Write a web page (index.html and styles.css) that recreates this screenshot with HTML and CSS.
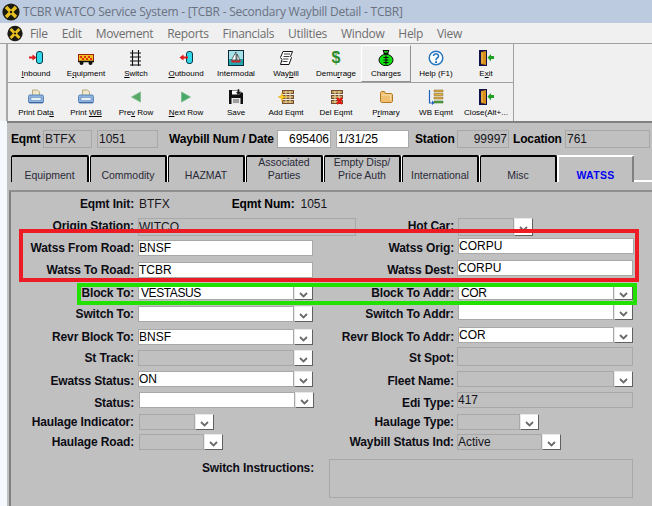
FILE: index.html
```html
<!DOCTYPE html>
<html lang="en">
<head>
<meta charset="utf-8">
<title>TCBR WATCO Service System</title>
<link rel="stylesheet" href="styles.css">
</head>
<body>
<svg class="defs" width="0" height="0" aria-hidden="true">
  <symbol id="logo" viewBox="0 0 18 18">
    <circle cx="9" cy="9" r="8.6" fill="#1a1a12"/>
    <path d="M4 4 14 14M14 4 4 14" stroke="#e8c020" stroke-width="3.4"/>
    <circle cx="9" cy="9" r="1.2" fill="#1a1a12"/>
  </symbol>
  <symbol id="chev" viewBox="0 0 9 6">
    <path d="M1 1 4.5 4.5 8 1" fill="none" stroke="#6a6a6a" stroke-width="1.8"/>
  </symbol>
  <symbol id="door" viewBox="0 0 16 16">
    <path d="M1 0h8v16H1z" fill="#10104a"/>
    <path d="M3 2 8 1v14l-5-1z" fill="#d89018"/>
    <path d="M4 3v10" stroke="#f0c060"/>
    <path d="M16 6v3h-3v2.500L9.500 7.500 13 4v2z" fill="#20a020"/>
  </symbol>
  <symbol id="printer" viewBox="0 0 16 15">
    <path d="M4.500 .5h5l2 2v4h-7z" fill="#f0e8c8" stroke="#b8a880"/>
    <rect x=".5" y="5.500" width="15" height="8" rx="1.500" fill="#8cb4e0" stroke="#5c84b8"/>
    <rect x="3" y="8" width="10" height="3" fill="#e8f0fa" stroke="#6a8cb8" stroke-width=".6"/>
    <path d="M1 13h14" stroke="#3c64a0"/>
  </symbol>
  <symbol id="rows" viewBox="0 0 15 14">
    <g fill="#c8a060" stroke="#705030" stroke-width="1">
      <rect x="3.500" y=".5" width="11" height="3"/>
      <rect x="3.500" y="5.500" width="11" height="3"/>
      <rect x="3.500" y="10.500" width="11" height="3"/>
    </g>
    <path d="M7 1v12M11 1v12" stroke="#f0e0b0"/>
  </symbol>
</svg>

<header class="title-bar">
  <svg class="logo-title"><use href="#logo"/></svg>
  <span class="title-text">TCBR WATCO Service System - [TCBR - Secondary Waybill Detail - TCBR]</span>
</header>

<nav class="menu-bar">
  <svg class="logo-menu"><use href="#logo"/></svg>
  <span>File</span><span>Edit</span><span>Movement</span><span>Reports</span><span>Financials</span><span>Utilities</span><span>Window</span><span>Help</span><span>View</span>
</nav>

<section class="toolbars">
  <div class="toolbar">
    <div class="tool">
      <svg class="ico" viewBox="0 0 16 16"><rect x="8.500" y="1.500" width="6" height="12" rx="2.500" fill="#30d8e8" stroke="#083848"/><path d="M1 7.500h4" stroke="#e01818" stroke-width="2"/><path d="M4.500 4.500 8.500 7.500 4.500 10.500z" fill="#e01818"/></svg>
      <span><u>I</u>nbound</span>
    </div>
    <div class="tool">
      <svg class="ico" viewBox="0 0 16 16"><rect x=".5" y="4.500" width="15" height="7" fill="#f0c020" stroke="#a02010"/><path d="M2 6h2v2H2zM6 6h2v2H6zM10 6h2v2h-2zM4 8h2v2H4zM8 8h2v2H8zM12 8h2v2h-2z" fill="#e03010"/><path d="M0 11.500h16" stroke="#111" stroke-width="1.500"/><circle cx="3.500" cy="13" r="2" fill="#111"/><circle cx="12.500" cy="13" r="2" fill="#111"/></svg>
      <span>E<u>q</u>uipment</span>
    </div>
    <div class="tool">
      <svg class="ico" viewBox="0 0 16 16"><path d="M4.500 0v16M10.500 0v16M2 3h11M2 7h11M2 11h11M2 15h11" stroke="#111" stroke-width="1.100"/></svg>
      <span><u>S</u>witch</span>
    </div>
    <div class="tool">
      <svg class="ico" viewBox="0 0 16 16"><rect x="8.500" y="1.500" width="6" height="12" rx="2.500" fill="#30d8e8" stroke="#083848"/><path d="M5 7.500h5" stroke="#e01818" stroke-width="2"/><path d="M5.500 4.500 1.500 7.500 5.500 10.500z" fill="#e01818"/></svg>
      <span><u>O</u>utbound</span>
    </div>
    <div class="tool">
      <svg class="ico" viewBox="0 0 16 16"><rect x=".5" y=".5" width="15" height="15" fill="#20a8b0" stroke="#082838"/><path d="M1 1h14v8H1z" fill="#a8e0e8"/><path d="M8 2v8H3.500z" fill="#fff" stroke="#111" stroke-width=".6"/><path d="M9 4l3 6H9z" fill="#fff" stroke="#111" stroke-width=".6"/><path d="M2.500 10.500h11l-1.500 2H4z" fill="#d82020"/></svg>
      <span>Intermodal</span>
    </div>
    <div class="tool">
      <svg class="ico" viewBox="0 0 16 16"><path d="M5 1.500h9.500l-2 5 1 1-2.500 7H2.500l1.500-5-1.500-2z" fill="#fff" stroke="#111"/><path d="M6 4h6M5.500 6.500h6M5 9h5.500M4.500 11.500h5" stroke="#111" stroke-width=".8"/></svg>
      <span>Way<u>b</u>ill</span>
    </div>
    <div class="tool">
      <span class="dollar">$</span>
      <span>Demu<u>r</u>rage</span>
    </div>
    <div class="tool tool-raised">
      <svg class="ico" viewBox="0 0 16 16"><path d="M5 .5h6l-1.500 3h-3z" fill="#18c018" stroke="#111"/><ellipse cx="8" cy="10" rx="7" ry="5.700" fill="#10e010" stroke="#111"/><path d="M5.500 3.500h5" stroke="#111" stroke-width="1.400"/><path d="M8 5.500v9M5.500 7.500h5M5.500 10h5M5.500 12.500h5" stroke="#111" stroke-width="1.100"/></svg>
      <span>Charges</span>
    </div>
    <div class="tool">
      <svg class="ico" viewBox="0 0 16 16"><circle cx="8" cy="8" r="6.800" fill="#fff" stroke="#2878c0" stroke-width="1.500"/><path d="M5.500 6a2.500 2.200 0 1 1 3.800 1.900C8.300 8.600 8 9 8 10.200" fill="none" stroke="#2070b8" stroke-width="1.600"/><path d="M7 11.300h2v1.800H7z" fill="#2070b8"/></svg>
      <span>Help (F1)</span>
    </div>
    <div class="tool">
      <svg class="ico"><use href="#door"/></svg>
      <span>E<u>x</u>it</span>
    </div>
  </div>
  <div class="toolbar">
    <div class="tool">
      <svg class="ico"><use href="#printer"/></svg>
      <span>Print Dat<u>a</u></span>
    </div>
    <div class="tool">
      <svg class="ico"><use href="#printer"/></svg>
      <span>Print <u>WB</u></span>
    </div>
    <div class="tool">
      <svg class="ico" viewBox="0 0 16 16"><path d="M12.500 3v10L3.500 8z" fill="#58a868" stroke="#80c090"/></svg>
      <span>Pre<u>v</u> Row</span>
    </div>
    <div class="tool">
      <svg class="ico" viewBox="0 0 16 16"><path d="M3.500 3v10l9-5z" fill="#48a868" stroke="#80c090"/></svg>
      <span><u>N</u>ext Row</span>
    </div>
    <div class="tool">
      <svg class="ico" viewBox="0 0 16 16"><path d="M1 1h9l5 3v11H1z" fill="#111"/><path d="M4 1.500h5v4H4z" fill="#fff"/><path d="M3.500 9h9v6h-9z" fill="#e8e8e8"/><path d="M5 11h6M5 13h6" stroke="#555"/><path d="M9.500 0h2v3h2l-3 3-3-3h2z" fill="#111" stroke="#fff" stroke-width=".4"/></svg>
      <span>Save</span>
    </div>
    <div class="tool">
      <svg class="ico" viewBox="0 0 16 16"><use href="#rows" x="1" y="1" width="15" height="14"/><path d="M4 3.500 5 7l3.300 1-3.300 1-1 3.500L3 9 0 8l3-1z" fill="#ffd020" stroke="#e8a010" stroke-width=".5"/></svg>
      <span>Add Eqmt</span>
    </div>
    <div class="tool">
      <svg class="ico" viewBox="0 0 16 16"><use href="#rows" x="0" y="1" width="15" height="14"/><path d="M9 9l5 6M14 9l-5 6" stroke="#e81010" stroke-width="2"/></svg>
      <span>Del Eqmt</span>
    </div>
    <div class="tool">
      <svg class="ico" viewBox="0 0 16 16"><path d="M2.500 4.500V3.500l1-1h3l1 2h6l1 1v7l-1 1h-10l-1-1z" fill="#f0c070" stroke="#b07820"/><path d="M3.500 6h9v5" fill="none" stroke="#f8e0b0"/></svg>
      <span>P<u>r</u>imary</span>
    </div>
    <div class="tool">
      <svg class="ico" viewBox="0 0 16 16"><path d="M1.500 1v13H5" fill="none" stroke="#2060c0" stroke-width="1.200"/><path d="M4 11.500 6.500 14 4 16z" fill="#2060c0"/><path d="M6 1h9v2H6zM6 4.500h9v2H6zM6 8h9v2H6z" fill="#e0b040" stroke="#806020" stroke-width=".5"/><path d="M6 12h9v2H6z" fill="#50a840" stroke="#306020" stroke-width=".5"/></svg>
      <span>WB Eqmt</span>
    </div>
    <div class="tool">
      <svg class="ico"><use href="#door"/></svg>
      <span>Close(Alt+...</span>
    </div>
  </div>
</section>

<main class="content">
  <div class="head-row">
    <b class="head-eqmt">Eqmt</b>
    <div class="field w49">BTFX</div>
    <div class="field w61 ml5">1051</div>
    <b class="head-waybill">Waybill Num / Date</b>
    <div class="field on w54 right">695406</div>
    <div class="field on w73 ml5">1/31/25</div>
    <b class="head-station">Station</b>
    <div class="field w52 right">99997</div>
    <b class="head-location">Location</b>
    <div class="field w85">761</div>
  </div>

  <div class="tabstrip">
    <div class="tabs">
      <div class="tab first">Equipment</div>
      <div class="tab">Commodity</div>
      <div class="tab">HAZMAT</div>
      <div class="tab">Associated<br>Parties</div>
      <div class="tab">Empty Disp/<br>Price Auth</div>
      <div class="tab">International</div>
      <div class="tab">Misc</div>
      <div class="tab active">WATSS</div>
    </div>
    <div class="tab-rest"></div>
  </div>

  <section class="panel">
    <div class="row">
      <b class="lbl">Eqmt Init:</b>
      <div class="pair"><span class="val">BTFX</span><b class="num-lbl">Eqmt Num:</b><span class="val">1051</span></div>
    </div>
    <div class="row">
      <b class="lbl">Origin Station:</b><div class="field w218 dn1">WITCO</div>
      <b class="lbl r">Hot Car:</b><div class="combo w75 dn1 ml1"><div class="field"></div><div class="btn"><svg><use href="#chev"/></svg></div></div>
    </div>
    <div class="row">
      <b class="lbl">Watss From Road:</b><div class="field on w175">BNSF</div>
      <b class="lbl r">Watss Orig:</b><div class="field on w176 up2 ml1">CORPU</div>
    </div>
    <div class="row">
      <b class="lbl">Watss To Road:</b><div class="field on w175">TCBR</div>
      <b class="lbl r">Watss Dest:</b><div class="field on w176 up2">CORPU</div>
    </div>
    <div class="row g9">
      <b class="lbl">Block To:</b><div class="combo w175 thin"><div class="field on"><i>VESTASUS</i></div><div class="btn"><svg><use href="#chev"/></svg></div></div>
      <b class="lbl r">Block To Addr:</b><div class="combo w175 thin ml1"><div class="field on"><i>COR</i></div><div class="btn"><svg><use href="#chev"/></svg></div></div>
    </div>
    <div class="row g7">
      <b class="lbl">Switch To:</b><div class="combo w175"><div class="field on"></div><div class="btn"><svg><use href="#chev"/></svg></div></div>
      <b class="lbl r">Switch To Addr:</b><div class="combo w175 up2 ml1"><div class="field on"></div><div class="btn"><svg><use href="#chev"/></svg></div></div>
    </div>
    <div class="row g9">
      <b class="lbl">Revr Block To:</b><div class="combo w175"><div class="field on">BNSF</div><div class="btn"><svg><use href="#chev"/></svg></div></div>
      <b class="lbl r">Revr Block To Addr:</b><div class="combo w175 up2 ml1"><div class="field on">COR</div><div class="btn"><svg><use href="#chev"/></svg></div></div>
    </div>
    <div class="row g7">
      <b class="lbl">St Track:</b><div class="combo w175"><div class="field"></div><div class="btn"><svg><use href="#chev"/></svg></div></div>
      <b class="lbl r">St Spot:</b><div class="field w176 tall up2"></div>
    </div>
    <div class="row g9">
      <b class="lbl">Ewatss Status:</b><div class="combo w175 up2"><div class="field on">ON</div><div class="btn"><svg><use href="#chev"/></svg></div></div>
      <b class="lbl r">Fleet Name:</b><div class="combo w176 up2"><div class="field"></div><div class="btn"><svg><use href="#chev"/></svg></div></div>
    </div>
    <div class="row">
      <b class="lbl">Status:</b><div class="combo w175 up3 ml1"><div class="field on"></div><div class="btn"><svg><use href="#chev"/></svg></div></div>
      <b class="lbl r">Edi Type:</b><div class="field w176 up3">417</div>
    </div>
    <div class="row g5">
      <b class="lbl">Haulage Indicator:</b><div class="combo w75 ml1"><div class="field"></div><div class="btn"><svg><use href="#chev"/></svg></div></div>
      <b class="lbl r">Haulage Type:</b><div class="combo w82"><div class="field"></div><div class="btn"><svg><use href="#chev"/></svg></div></div>
    </div>
    <div class="row g6">
      <b class="lbl">Haulage Road:</b><div class="combo w84 ml1"><div class="field"></div><div class="btn"><svg><use href="#chev"/></svg></div></div>
      <b class="lbl r">Waybill Status Ind:</b><div class="combo w104"><div class="field">Active</div><div class="btn"><svg><use href="#chev"/></svg></div></div>
    </div>
    <div class="row notes g12">
      <b class="lbl">Switch Instructions:</b>
      <div class="field notes-box"></div>
    </div>
  </section>
</main>

<div class="mark mark-red"></div>
<div class="mark mark-green"></div>
</body>
</html>
```
FILE: styles.css
```css
* { box-sizing: border-box; }
html, body { margin: 0; padding: 0; }
body {
  width: 652px;
  height: 506px;
  overflow: hidden;
  position: relative;
  background: #f5f8fc;
  font-family: "Liberation Sans", Arial, sans-serif;
  font-size: 12px;
  color: #000;
}
.defs { position: absolute; }

.title-bar {
  height: 23px;
  background: #bccbdf;
  display: flex;
  align-items: center;
  padding-left: 2px;
}
.logo-title { width: 18px; height: 18px; }
.title-text {
  margin-left: 3px;
  font-family: "Open Sans", sans-serif;
  font-size: 12px;
  letter-spacing: -0.23px;
  color: #6a7280;
}

.menu-bar {
  height: 21px;
  background: #f0f0f0;
  border-bottom: 1px solid #a0a0a0;
  display: flex;
  align-items: center;
  gap: 14px;
  padding-left: 7px;
  font-family: "Open Sans", sans-serif;
  font-size: 12px;
  letter-spacing: -0.33px;
  color: #6e6e6e;
}
.logo-menu { width: 16px; height: 17px; margin-right: -7px; }

.toolbars { background: #f0f0f0; padding-left: 6px; }
.toolbar {
  width: 508px;
  height: 39px;
  display: flex;
  padding-left: 3px;
  border-left: 2px solid #a8a8a8;
  border-right: 1px solid #a0a0a0;
  border-bottom: 1px solid #a0a0a0;
}
.toolbar + .toolbar { height: 38px; border-bottom: 0; }
.tool {
  width: 50px;
  height: 37px;
  margin-top: 1px;
  display: flex;
  flex-direction: column;
  align-items: center;
  font-size: 8px;
  line-height: 9px;
  white-space: nowrap;
}
.tool-raised {
  border: 1px solid;
  border-color: #fff #909090 #909090 #fff;
}
.ico { width: 16px; height: 16px; margin-top: 5px; margin-bottom: 3px; flex: none; }
.tool-raised .ico { margin-top: 4px; }
.dollar {
  height: 16px;
  margin-top: 5px;
  margin-bottom: 3px;
  font-size: 16px;
  line-height: 16px;
  color: #2a8a2a;
  font-weight: bold;
}

.content {
  margin-left: 7px;
  height: 385px;
  background: #c0c0c0;
  border-top: 2px solid #808080;
  overflow: hidden;
}
.head-row {
  height: 32px;
  padding: 7px 0 0 4px;
  display: flex;
  align-items: flex-start;
}
.head-row b { line-height: 18px; letter-spacing: -0.15px; }
.head-eqmt { width: 32px; }
.head-waybill { margin-left: 11px; width: 108px; white-space: nowrap; }
.head-station { margin-left: 6px; width: 42px; }
.head-location { margin-left: 4px; width: 52px; }

.field {
  height: 16px;
  flex: none;
  display: flex;
  align-items: center;
  padding-left: 0;
  border: 1px solid #a8a8a8;
  background: #c0c0c0;
  color: #16161c;
  line-height: 14px;
  white-space: nowrap;
  overflow: hidden;
}
.field i { font-style: normal; margin-left: 2px; letter-spacing: -0.4px; }
.field.on { background: #fff; color: #000; }
.head-row .field { height: 18px; padding-left: 1px; }
.head-row .right { padding: 0 1px 0 0; }
.right { justify-content: flex-end; }
.w49 { width: 49px; } .w61 { width: 61px; } .w54 { width: 54px; }
.w73 { width: 73px; } .w52 { width: 52px; } .w85 { width: 85px; }
.w218 { width: 218px; } .w175 { width: 175px; } .w176 { width: 176px; }
.w75 { width: 75px; } .w82 { width: 82px; } .w84 { width: 84px; } .w104 { width: 104px; }
.ml5 { margin-left: 5px; }
.ml1 { margin-left: 1px; }

.tabstrip { height: 35px; display: flex; align-items: flex-start; margin-left: 4px; }
.tabs { display: flex; gap: 1px; height: 27px; background: #fff; }
.tab {
  width: 77px;
  height: 27px;
  background: #c0c0c0;
  border: 2px solid #000;
  border-width: 2px 2px 0 1px;
  border-radius: 2px 2px 0 0;
  display: flex;
  align-items: flex-end;
  justify-content: center;
  text-align: center;
  font-size: 10.500px;
  line-height: 13px;
  color: #2a2a38;
}
.tab.first { width: 78px; }
.tab.active {
  width: 76px;
  border-color: #fff #808080 #c0c0c0 #fff;
  color: #0000f0;
  font-weight: bold;
  letter-spacing: .3px;
}
.tab-rest { flex: 1; height: 27px; border-bottom: 2px solid #fff; }

.panel {
  margin-left: 2px;
  height: 320px;
  border-top: 2px solid #909090;
  border-left: 2px solid #808080;
  padding: 5px 0 0 1px;
}
.row {
  display: grid;
  grid-template-columns: 126px 192px 127px 1fr;
  grid-template-rows: 14px;
  height: 14px;
  margin-top: 8px;
  align-items: center;
  justify-items: start;
}
.row:first-child { margin-top: 0; }
.g9 { margin-top: 9px; }
.g7 { margin-top: 7px; }
.g5 { margin-top: 5px; }
.g6 { margin-top: 6px; }
.g12 { margin-top: 12px; }
.lbl {
  justify-self: end;
  padding-right: 4px;
  line-height: 14px;
  white-space: nowrap;
  letter-spacing: -0.13px;
  color: #0c0c14;
}
.lbl.r { padding-right: 3px; }
.pair { display: flex; align-items: center; padding-left: 1px; white-space: nowrap; }
.val { color: #16161c; }
.num-lbl { margin-left: 62px; margin-right: 6px; letter-spacing: -0.13px; }

.combo { display: flex; height: 16px; }
.combo .field { flex: 1; min-width: 0; width: auto; }
.btn {
  flex: none;
  width: 19px;
  height: 100%;
  background: #fff;
  border: 1px solid;
  border-color: #e8e8e8 #606060 #606060 #e8e8e8;
  display: flex;
  align-items: center;
  justify-content: center;
}
.btn svg { width: 9px; height: 6px; margin-top: 3px; }
.thin { height: 14px; }
.thin .field { height: 14px; }
.tall { height: 19px; }
.up2 { margin-bottom: 4px; }
.up3 { margin-bottom: 6px; }
.dn1 { margin-top: 2px; height: 18px; }
.dn1 .field { height: 18px; }

.row.notes { grid-template-columns: 304px 1fr; }
.row.notes .lbl { padding-right: 2px; }
.notes-box {
  width: 304px;
  height: 39px;
  margin-left: 13px;
  align-self: start;
  margin-top: -2px;
}

.mark { position: absolute; background: transparent; pointer-events: none; }
.mark-red { left: 19px; top: 229px; width: 620px; height: 53px; border: 4px solid #ed1c24; }
.mark-green { left: 77px; top: 283px; width: 560px; height: 22px; border: 4px solid #22e000; }
```
